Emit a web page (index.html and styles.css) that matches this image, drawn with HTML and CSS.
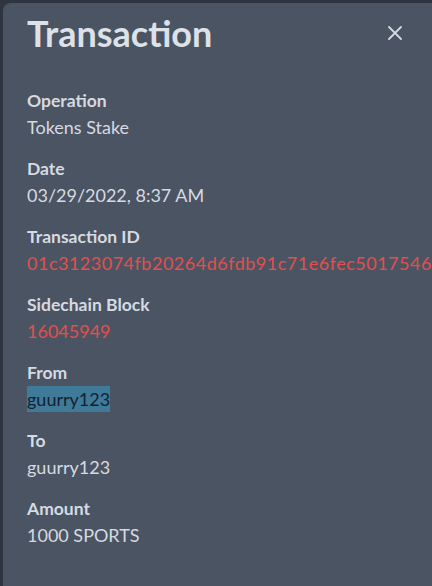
FILE: index.html
```html
<!DOCTYPE html>
<html lang="en">
<head>
    <meta charset="UTF-8">
    <meta name="viewport" content="width=device-width, initial-scale=1.0">
    <title>Transaction</title>
    <link rel="stylesheet" href="styles.css">
</head>
<body>

    <div class="panel">
        <div class="header">
            <h2>Transaction</h2>
            <svg class="close" width="14" height="14" viewBox="0 0 14 14">
                <path d="M1 1 L13 13 M13 1 L1 13" stroke="#d4d8e0" stroke-width="1.8" stroke-linecap="round"/>
            </svg>
        </div>

        <div class="field">
            <div class="label">Operation</div>
            <div class="value">Tokens Stake</div>
        </div>
        <div class="field">
            <div class="label">Date</div>
            <div class="value">03/29/2022, 8:37 AM</div>
        </div>
        <div class="field">
            <div class="label">Transaction ID</div>
            <div class="value red txid">01c3123074fb20264d6fdb91c71e6fec5017546a3c</div>
        </div>
        <div class="field">
            <div class="label">Sidechain Block</div>
            <div class="value red">16045949</div>
        </div>
        <div class="field">
            <div class="label">From</div>
            <div class="value"><span class="selected">guurry123</span></div>
        </div>
        <div class="field">
            <div class="label">To</div>
            <div class="value">guurry123</div>
        </div>
        <div class="field">
            <div class="label">Amount</div>
            <div class="value">1000 SPORTS</div>
        </div>
    </div>

</body>
</html>
```

FILE: styles.css
```css
body {
    margin: 0;
    padding: 3px 0 0 3px;
    height: 586px;
    box-sizing: border-box;
    overflow: hidden;
    background-color: #2e3440;
    font-family: Lato, "Noto Sans", sans-serif;
}
.panel {
    background-color: #4b5462;
    border-top-left-radius: 8px;
    height: 600px;
    padding: 0 0 0 24px;
    white-space: nowrap;
    overflow: hidden;
}
.header {
    display: flex;
    align-items: center;
    justify-content: space-between;
    padding: 5px 30px 0 0;
    height: 50px;
}
.header h2 {
    margin: 0;
    font-size: 36px;
    font-weight: 700;
    color: #dde1e8;
}
.field {
    margin-top: 18px;
}
.header + .field {
    margin-top: 31px;
}
.label {
    font-size: 17.5px;
    font-weight: 700;
    color: #d6dae1;
    line-height: 23px;
}
.value {
    font-size: 18px;
    color: #d6dae1;
    line-height: 23px;
    margin-top: 4px;
}
.red {
    color: #e0504f;
}
.txid {
    letter-spacing: 0.5px;
}
.selected {
    background-color: #3f7b99;
    color: #162030;
    padding: 2px 0;
}
```
